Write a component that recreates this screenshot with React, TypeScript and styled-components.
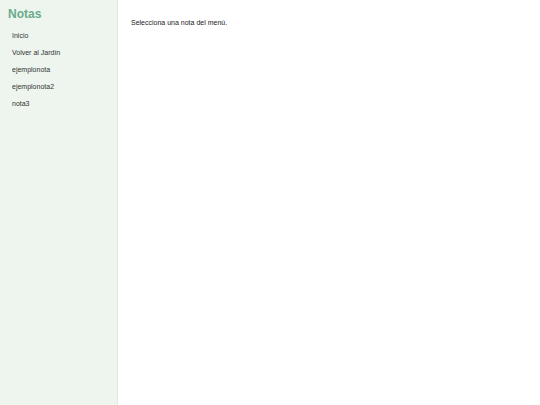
import React from 'react';
import styled, { createGlobalStyle } from 'styled-components';

const GlobalStyle = createGlobalStyle`
  html, body {
    margin: 0;
    padding: 0;
    height: 100%;
    background: #ffffff;
    font-family: "Liberation Sans", Arial, sans-serif;
  }
  #root {
    height: 100%;
  }
`;

const Layout = styled.div`
  display: flex;
  height: 100vh;
`;

const Sidebar = styled.aside`
  width: 118px;
  flex-shrink: 0;
  background: #edf5ee;
  border-right: 1px solid #dde8df;
  padding: 8px 0 0 8px;
  box-sizing: border-box;
`;

const Title = styled.h1`
  margin: 0 0 11px 0;
  font-size: 12px;
  line-height: 12px;
  font-weight: 700;
  color: #6aab89;
`;

const Menu = styled.ul`
  list-style: none;
  margin: 0;
  padding: 0 0 0 4px;
  display: flex;
  flex-direction: column;
  gap: 8px;
`;

const MenuLink = styled.a`
  display: block;
  font-size: 7px;
  line-height: 9px;
  color: #333333;
  text-decoration: none;
`;

const Main = styled.main`
  flex: 1;
  padding: 18px 13px;
`;

const Message = styled.p`
  margin: 0;
  font-size: 7px;
  line-height: 9px;
  color: #222222;
`;

const items = ['Inicio', 'Volver al Jardín', 'ejemplonota', 'ejemplonota2', 'nota3'];

const App: React.FC = () => {
  return (
    <>
      <GlobalStyle />
      <Layout>
        <Sidebar>
          <Title>Notas</Title>
          <Menu>
            {items.map((item) => (
              <li key={item}>
                <MenuLink href="#">{item}</MenuLink>
              </li>
            ))}
          </Menu>
        </Sidebar>
        <Main>
          <Message>Selecciona una nota del menú.</Message>
        </Main>
      </Layout>
    </>
  );
};

export default App;
